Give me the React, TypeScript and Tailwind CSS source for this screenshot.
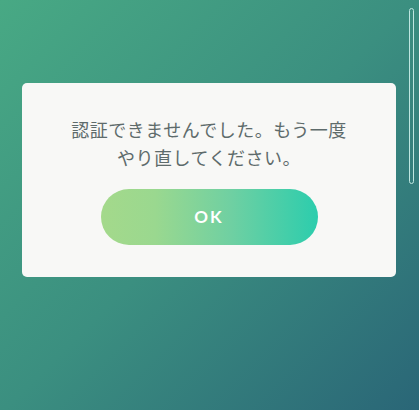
export default function App() {
  return (
    <div className="relative h-[410px] w-full overflow-hidden bg-[linear-gradient(135deg,#48a984_0%,#3b8f80_50%,#2a6677_100%)] pt-[83px]">
      {/* dialog card */}
      <div className="mx-[22px] w-[374px] rounded-[5px] bg-[#f8f8f6] px-4 pb-[32px] pt-[32px]">
        <p
          className="text-center text-[18px] leading-[28px] tracking-[0.5px] text-[#5e6b6b]"
          style={{ fontFamily: '"Noto Sans CJK JP", "Noto Sans", sans-serif' }}
        >
          認証できませんでした。もう一度
          <br />
          やり直してください。
        </p>
        <button
          className="mx-auto mt-[18px] flex h-[56px] w-[217px] items-center justify-center rounded-full bg-[linear-gradient(90deg,#a4d98b_0%,#9ad88f_25%,#6fd0a2_60%,#2ccdad_100%)] text-[17px] font-bold tracking-[2px] text-white"
          style={{ fontFamily: 'Lato, "Noto Sans", sans-serif' }}
        >
          OK
        </button>
      </div>

      {/* scrollbar thumb */}
      <div className="absolute right-[5px] top-[8px] h-[176px] w-[5px] rounded-full border border-[#bfe6e0]" />
    </div>
  );
}
